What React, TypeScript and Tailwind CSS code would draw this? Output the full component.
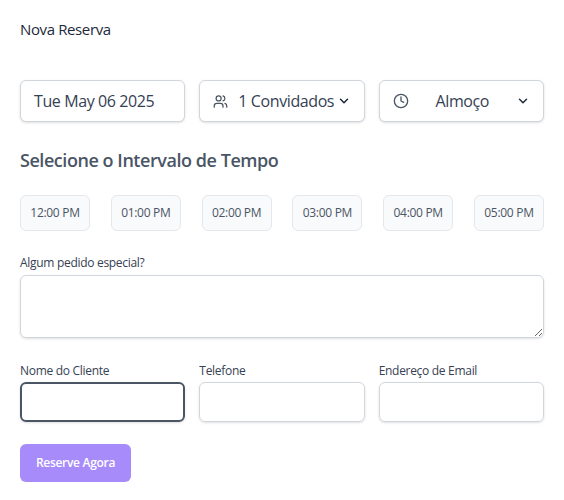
import { Users, Clock, ChevronDown } from "lucide-react";

export default function App() {
  const slots = ["12:00 PM", "01:00 PM", "02:00 PM", "03:00 PM", "04:00 PM", "05:00 PM"];
  const box = "h-[42px] rounded-md border border-gray-300 bg-white shadow-sm flex items-center";
  return (
    <div className="w-[564px] h-[500px] bg-white px-5 pt-[19px] text-gray-800" style={{ fontFamily: "'Open Sans', sans-serif" }}>
      <div className="text-[15px] tracking-tight leading-5">Nova Reserva</div>
      <div className="grid grid-cols-3 gap-[14px] mt-[41px]">
        <div className={`${box} px-[13px] text-[16px] tracking-tight text-gray-700`}>Tue May 06 2025</div>
        <div className={`${box} pl-[13px] pr-[13px] text-[16px] tracking-tight text-gray-700`}>
          <Users size={15} className="mr-[10px] text-gray-600" />
          <span className="flex-1 text-left">1 Convidados</span>
          <ChevronDown size={14} strokeWidth={2.5} className="text-gray-800" />
        </div>
        <div className={`${box} px-[13px] text-[16px] tracking-tight text-gray-700`}>
          <Clock size={16} className="text-gray-600" />
          <span className="flex-1 text-center">Almoço</span>
          <ChevronDown size={14} strokeWidth={2.5} className="text-gray-800" />
        </div>
      </div>
      <div className="mt-[26px] text-[18px] font-semibold tracking-tight text-gray-600 leading-6">Selecione o Intervalo de Tempo</div>
      <div className="flex justify-between mt-[23px]">
        {slots.map((s) => (
          <div key={s} className="w-[70px] h-[36px] rounded-md border border-gray-200 bg-gray-50 flex items-center justify-center text-[12px] tracking-tight text-gray-600">{s}</div>
        ))}
      </div>
      <div className="mt-[24px] text-[12px] tracking-tight text-gray-700 leading-4">Algum pedido especial?</div>
      <textarea className="mt-[4px] block w-full h-[63px] rounded-md border border-gray-300 shadow-sm" />
      <div className="grid grid-cols-3 gap-[14px] mt-[25px]">
        {["Nome do Cliente", "Telefone", "Endereço de Email"].map((l, i) => (
          <div key={l}>
            <div className="text-[12px] tracking-tight text-gray-700 leading-4">{l}</div>
            <input className={`mt-[3px] block w-full h-[40px] rounded-md border shadow-sm outline-none ${i === 0 ? "border-2 border-gray-600" : "border-gray-300"}`} />
          </div>
        ))}
      </div>
      <button className="mt-[22px] w-[111px] h-[38px] rounded-md bg-[#a78bfa] text-white text-[12px] font-semibold tracking-tight">Reserve Agora</button>
    </div>
  );
}
